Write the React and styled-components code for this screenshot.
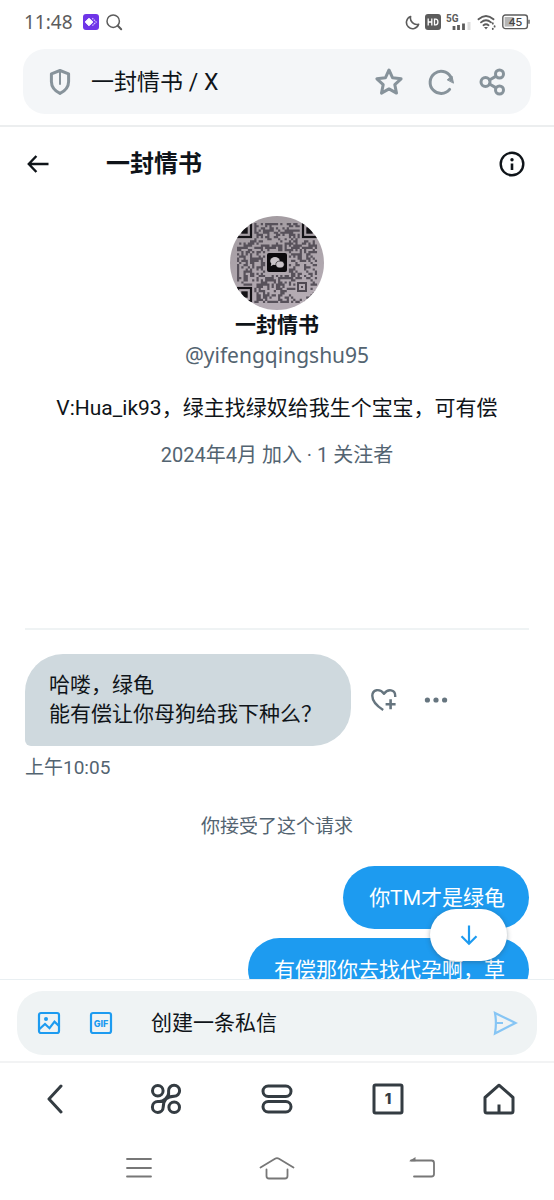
import React from 'react';
import styled, { createGlobalStyle } from 'styled-components';

const GlobalStyle = createGlobalStyle`
  * { box-sizing: border-box; }
  body {
    margin: 0;
    background: #fff;
    color: #0f1419;
    font-family: Roboto, "Noto Sans CJK SC", sans-serif;
  }
  button, input { font: inherit; color: inherit; }
  svg { display: block; flex: none; }
`;

const Screen = styled.div`
  display: flex;
  flex-direction: column;
  height: 100vh;
  background: #fff;
`;

const StatusBar = styled.div`
  display: flex;
  align-items: center;
  justify-content: space-between;
  height: 44px;
  padding: 0 24px;
  color: #5c5c5c;
`;

const StatusGroup = styled.div`
  display: flex;
  align-items: center;
  gap: ${(p) => p.$gap}px;
`;

const Clock = styled.time`
  font-family: "Noto Sans", sans-serif;
  font-size: 19px;
  line-height: 24px;
  margin-right: 3px;
`;

const AddressWrap = styled.div`
  padding: 5px 23px 11px;
  border-bottom: 2px solid #eceeef;
`;

const AddressBar = styled.div`
  display: flex;
  align-items: center;
  height: 65px;
  padding: 0 23px 0 24px;
  border-radius: 22px;
  background: #f4f6f8;
`;

const AddressText = styled.div`
  flex: 1;
  margin-left: 18px;
  padding-top: 3px;
  font-size: 23px;
  line-height: 32px;
`;

const IconButton = styled.button`
  display: flex;
  align-items: center;
  justify-content: center;
  width: ${(p) => p.$w || 30}px;
  height: ${(p) => p.$h || 30}px;
  padding: 0;
  border: 0;
  background: none;
  color: ${(p) => p.$color || 'inherit'};
  cursor: pointer;
`;

const Actions = styled.div`
  display: flex;
  gap: 22px;
  color: #87939b;
`;

const Header = styled.header`
  display: flex;
  align-items: center;
  height: 73px;
  padding: 0 26px 0 22px;
`;

const Title = styled.h1`
  flex: 1;
  margin: 0 0 0 52px;
  font-size: 24px;
  line-height: 32px;
  font-weight: 700;
`;

const ChatArea = styled.main`
  position: relative;
  display: flex;
  flex: 1;
  min-height: 0;
`;

const Scroller = styled.div`
  flex: 1;
  overflow-y: auto;
  scrollbar-width: none;
  padding: 16px 25px 0;
`;

const Profile = styled.section`
  display: flex;
  flex-direction: column;
  align-items: center;
  height: 414px;
  border-bottom: 2px solid #eff3f4;
  text-align: center;
`;

const Name = styled.h2`
  margin: 0;
  font-size: 21px;
  line-height: 30px;
  font-weight: 700;
`;

const Handle = styled.p`
  margin: 0;
  font-family: "Noto Sans", sans-serif;
  font-size: 21px;
  line-height: 30px;
  color: #536471;
`;

const Bio = styled.p`
  margin: 23px 0 0;
  font-size: 21px;
  line-height: 30px;
`;

const Joined = styled.p`
  margin: 18px 0 0;
  font-size: 20px;
  line-height: 28px;
  color: #536471;
`;

const IncomingRow = styled.div`
  display: flex;
  align-items: center;
  margin-top: 24px;
`;

const Bubble = styled.div`
  padding: ${(p) => (p.$mine ? '18px 24px 16px 26px' : '17px 29px 17px 24px')};
  border-radius: ${(p) => (p.$mine ? '32px' : '38px 38px 38px 6px')};
  background: ${(p) => (p.$mine ? '#1d9bf0' : '#cfd9de')};
  color: ${(p) => (p.$mine ? '#fff' : '#0f1419')};
  font-size: 21px;
  line-height: 29px;
`;

const MessageActions = styled.div`
  display: flex;
  gap: 22px;
  margin-left: 18px;
  color: #66757f;
`;

const Stamp = styled.time`
  display: block;
  margin-top: 9px;
  font-size: 19px;
  line-height: 26px;
  color: #536471;
`;

const Notice = styled.p`
  margin: 33px 0 26px;
  text-align: center;
  font-size: 19px;
  line-height: 26px;
  color: #536471;
`;

const Outgoing = styled.div`
  display: flex;
  flex-direction: column;
  align-items: flex-end;
  gap: 9px;
`;

const JumpButton = styled.button`
  position: absolute;
  right: 47px;
  bottom: 18px;
  display: flex;
  align-items: center;
  justify-content: center;
  width: 77px;
  height: 52px;
  border: 0;
  border-radius: 26px;
  background: #fff;
  color: #1d9bf0;
  box-shadow: 0 1px 5px rgba(50, 70, 85, 0.4);
  cursor: pointer;
`;

const ComposerWrap = styled.form`
  padding: 11px 17px 6px;
  border-top: 1px solid #e9eff2;
  border-bottom: 2px solid #f2f3f4;
`;

const Composer = styled.div`
  display: flex;
  align-items: center;
  height: 64px;
  padding: 0 17px;
  border-radius: 26px;
  background: #eff3f4;
`;

const Attachments = styled.div`
  display: flex;
  gap: 22px;
`;

const MessageInput = styled.input`
  flex: 1;
  min-width: 0;
  margin-left: 35px;
  padding: 0;
  border: 0;
  outline: 0;
  background: none;
  font-size: 21px;
  line-height: 30px;
  &::placeholder { color: #0f1419; opacity: 1; }
`;

const BrowserNav = styled.nav`
  display: grid;
  grid-template-columns: repeat(5, 1fr);
  justify-items: center;
  align-items: center;
  height: 72px;
  color: #343c42;
`;

const SystemNav = styled.nav`
  display: flex;
  justify-content: space-between;
  align-items: center;
  height: 65px;
  padding: 0 118px;
  color: #777;
`;

const Svg = ({ w, h = w, sw = 2, children }) => (
  <svg width={w} height={h} viewBox={`0 0 ${w} ${h}`} fill="none" stroke="currentColor"
    strokeWidth={sw} strokeLinecap="round" strokeLinejoin="round" aria-hidden="true">
    {children}
  </svg>
);

const GRID = 37;
const CELL = 80 / GRID;

const buildModules = () => {
  let seed = 9241;
  let d = '';
  for (let y = 0; y < GRID; y += 1) {
    for (let x = 0; x < GRID; x += 1) {
      seed = (seed * 1103515245 + 12345) % 2147483648;
      const corner = (x < 8 && y < 8) || (x > 28 && y < 8) || (x < 8 && y > 28);
      const middle = x > 12 && x < 24 && y > 12 && y < 24;
      const mark = x > 26 && x < 34 && y > 26 && y < 34;
      if (!corner && !middle && !mark && seed / 2147483648 > 0.54) {
        d += `M${(7 + x * CELL).toFixed(2)} ${(7 + y * CELL).toFixed(2)}h2.2v2.2h-2.2z`;
      }
    }
  }
  return d;
};
const MODULES = buildModules();

const Finder = ({ x, y }) => (
  <g transform={`translate(${x} ${y})`}>
    <rect x="1" y="1" width="13" height="13" fill="none" stroke="#141216" strokeWidth="2.2" />
    <rect x="4.3" y="4.3" width="6.4" height="6.4" fill="#141216" />
  </g>
);

const Avatar = () => (
  <svg width="94" height="94" viewBox="0 0 94 94" role="img" aria-label="头像">
    <defs>
      <clipPath id="round"><circle cx="47" cy="47" r="47" /></clipPath>
      <linearGradient id="paper" x1="0" y1="0" x2="0.3" y2="1">
        <stop offset="0" stopColor="#a19a9f" />
        <stop offset="1" stopColor="#b5acb4" />
      </linearGradient>
    </defs>
    <g clipPath="url(#round)">
      <rect width="94" height="94" fill="url(#paper)" />
      <path d={MODULES} fill="#57515a" />
      <Finder x="7" y="7" />
      <Finder x="72" y="7" />
      <Finder x="7" y="71" />
      <rect x="68" y="67" width="8" height="8" fill="none" stroke="#4f4952" strokeWidth="2" />
      <rect x="71" y="70" width="2" height="2" fill="#4f4952" />
      <rect x="37" y="37" width="20" height="19" rx="2" fill="#0c0a0d" />
      <ellipse cx="45" cy="45" rx="4.8" ry="4" fill="#c9c3c8" />
      <path d="M41.5 47l-.8 3.2 3-1.6z" fill="#c9c3c8" />
      <ellipse cx="50" cy="48.5" rx="4.2" ry="3.4" fill="#c9c3c8" stroke="#0c0a0d" strokeWidth=".6" />
    </g>
  </svg>
);

export default function App() {
  return (
    <>
      <GlobalStyle />
      <Screen>
        <StatusBar>
          <StatusGroup $gap={7}>
            <Clock>11:48</Clock>
            <svg width="16" height="16" viewBox="0 0 16 16" aria-hidden="true">
              <rect width="16" height="16" rx="3" fill="#6f35e8" />
              <path d="M6 4.2L9.8 8 6 11.8 2.2 8z" fill="#fff" stroke="#fff" strokeWidth="1" strokeLinejoin="round" />
              <path d="M9.2 4.2L13.2 8l-4 3.8" fill="none" stroke="#cdb8ff" strokeWidth="1.2" strokeDasharray="1.6 .7" />
            </svg>
            <Svg w={17} sw={1.5}>
              <circle cx="7.2" cy="7.2" r="6.2" />
              <path d="M11.8 11.8l3.4 3.4" strokeWidth="2" />
            </Svg>
          </StatusGroup>
          <StatusGroup $gap={5}>
            <Svg w={15} sw={1.6}>
              <path d="M5.6 1.6A6.2 6.2 0 1 0 13.6 9.2 6.4 6.4 0 0 1 5.6 1.6z" />
            </Svg>
            <svg width="16" height="16" viewBox="0 0 16 16" aria-hidden="true">
              <rect width="16" height="16" rx="3" fill="#5c5c5c" />
              <path d="M3.2 4.600v6.800M6.800 4.600v6.800M3.200 8h3.600M9.500 5.200v5.600h1.200q2.200-.2 2.200-2.800t-2.200-2.800z" fill="none" stroke="#fff" strokeWidth="1.3" />
            </svg>
            <svg width="26" height="18" viewBox="0 0 26 18" aria-hidden="true">
              <text x="0" y="9" fontFamily="Roboto, sans-serif" fontSize="10" fontWeight="700" fill="#5c5c5c">5G</text>
              <path d="M8 13v4M12.500 12v5M17.500 10.500V17" stroke="#5c5c5c" strokeWidth="2.800" />
              <path d="M23 9v8" stroke="#ddd" strokeWidth="3" />
            </svg>
            <svg width="20" height="17" viewBox="0 0 20 17" fill="none" stroke="#5c5c5c" strokeWidth="1.800" strokeLinecap="round" aria-hidden="true">
              <path d="M1.500 5.300q7.500-6.600 15 0M4 8.400q5-4.200 10 0M6.500 11.200q2.500-2 5 0" />
              <path d="M7 13h4l-2 2.500z" fill="#5c5c5c" stroke="none" />
              <path d="M15.800 9.200v.5M17.600 12.200v.5M15.800 14.600v.5" />
            </svg>
            <svg width="28" height="16" viewBox="0 0 28 16" aria-hidden="true">
              <rect x=".8" y="1" width="24.600" height="13.600" rx="2.600" fill="none" stroke="#5c5c5c" strokeWidth="1.400" />
              <rect x="2.600" y="3" width="9" height="9.600" fill="#b5b5b5" />
              <path d="M27 5.800v4" stroke="#5c5c5c" strokeWidth="1.400" />
              <text x="13.400" y="12" textAnchor="middle" fontFamily="Inter, sans-serif" fontSize="11" fontWeight="500" fill="#444">45</text>
            </svg>
          </StatusGroup>
        </StatusBar>

        <AddressWrap>
          <AddressBar>
            <IconButton $w={26} aria-label="安全" $color="#87939b">
              <Svg w={24} h={28} sw={3}>
                <path d="M12 2.500l8.600 3.300v7.600c0 5.400-3.300 9.300-8.600 12-5.300-2.700-8.600-6.600-8.600-12V5.800z" />
                <path d="M12 4v12" strokeWidth="2" />
              </Svg>
            </IconButton>
            <AddressText>一封情书 / X</AddressText>
            <Actions>
              <IconButton aria-label="收藏">
                <Svg w={30} sw={3}>
                  <path d="M15 3l3.600 7.800 8.500 1-6.300 5.800 1.700 8.500L15 21.900l-7.500 4.200 1.700-8.500-6.300-5.800 8.500-1z" />
                </Svg>
              </IconButton>
              <IconButton aria-label="刷新">
                <Svg w={30} sw={3}>
                  <path d="M23.600 22.400A11 11 0 1 1 24.600 9.800" />
                  <path d="M21.500 12.600L26 9l1.400 6.800z" fill="currentColor" strokeWidth="1" />
                </Svg>
              </IconButton>
              <IconButton aria-label="分享">
                <Svg w={30} sw={3}>
                  <circle cx="7.500" cy="15" r="4.500" />
                  <circle cx="21.500" cy="7" r="4" />
                  <circle cx="21.500" cy="23" r="4" />
                  <path d="M11.500 13l6.200-3.600M11.500 17l6.200 3.600" />
                </Svg>
              </IconButton>
            </Actions>
          </AddressBar>
        </AddressWrap>

        <Header>
          <IconButton $w={32} aria-label="返回">
            <Svg w={24} h={20} sw={2.4}>
              <path d="M22.500 10H3M10.400 2L2.800 10l7.600 8" strokeLinecap="butt" strokeLinejoin="miter" />
            </Svg>
          </IconButton>
          <Title>一封情书</Title>
          <IconButton $w={32} aria-label="对话信息">
            <Svg w={26} sw={2.4}>
              <circle cx="13" cy="13" r="11.300" />
              <circle cx="13" cy="8.800" r="1.700" fill="currentColor" stroke="none" />
              <path d="M13 12.500v6.500" strokeLinecap="butt" strokeWidth="2.600" />
            </Svg>
          </IconButton>
        </Header>

        <ChatArea>
          <Scroller>
            <Profile>
              <Avatar />
              <Name>一封情书</Name>
              <Handle>@yifengqingshu95</Handle>
              <Bio>V:Hua_ik93，绿主找绿奴给我生个宝宝，可有偿</Bio>
              <Joined>2024年4月 加入 · 1 关注者</Joined>
            </Profile>

            <IncomingRow>
              <Bubble>哈喽，绿龟<br />能有偿让你母狗给我下种么？</Bubble>
              <MessageActions>
                <IconButton aria-label="添加回应">
                  <Svg w={30} sw={2.400}>
                    <path d="M14.200 25C7 20.500 3.300 15.500 3.300 10.800 3.300 4.400 10.800 3 15 8.800 19 3.200 26.200 4.500 26.200 10.800V12" strokeLinecap="butt" />
                    <path d="M21.600 14.200v10M16.600 19.200h10" strokeLinecap="butt" strokeWidth="2.600" />
                  </Svg>
                </IconButton>
                <IconButton aria-label="更多">
                  <svg width="24" height="6" viewBox="0 0 24 6" fill="currentColor" aria-hidden="true">
                    <circle cx="3.400" cy="3" r="2.600" />
                    <circle cx="12" cy="3" r="2.600" />
                    <circle cx="20.600" cy="3" r="2.600" />
                  </svg>
                </IconButton>
              </MessageActions>
            </IncomingRow>
            <Stamp>上午10:05</Stamp>
            <Notice>你接受了这个请求</Notice>
            <Outgoing>
              <Bubble $mine>你TM才是绿龟</Bubble>
              <Bubble $mine>有偿那你去找代孕啊，草</Bubble>
            </Outgoing>
          </Scroller>
          <JumpButton type="button" aria-label="滚动到底部">
            <Svg w={20} h={22} sw={2.200}>
              <path d="M10 1.500v18M2.500 12.200l7.500 7.500 7.500-7.500" strokeLinecap="butt" strokeLinejoin="miter" />
            </Svg>
          </JumpButton>
        </ChatArea>

        <ComposerWrap onSubmit={(e) => e.preventDefault()}>
          <Composer>
            <Attachments>
              <IconButton type="button" aria-label="图片" $color="#1d9bf0">
                <Svg w={24} sw={2.200}>
                  <rect x="2" y="2" width="20" height="20" rx="2" />
                  <circle cx="9" cy="8" r="2" fill="currentColor" stroke="none" />
                  <path d="M2.500 18l5.500-5 4.500 4.200 5-6.600 4.500 4.400" strokeLinejoin="miter" />
                </Svg>
              </IconButton>
              <IconButton type="button" aria-label="动图" $color="#1d9bf0">
                <Svg w={24} sw={2.200}>
                  <rect x="2" y="2" width="20" height="20" rx="2" />
                  <text x="12" y="15.500" textAnchor="middle" fontFamily="Inter, sans-serif" fontSize="9" fontWeight="800" fill="currentColor" stroke="none">GIF</text>
                </Svg>
              </IconButton>
            </Attachments>
            <MessageInput aria-label="创建一条私信" placeholder="创建一条私信" />
            <IconButton aria-label="发送" $color="#86c5f4">
              <Svg w={26} sw={2.200}>
                <path d="M3 3l20.500 10L3 23.500q1.800-10.300 0-20.500zM4 13h7" strokeLinejoin="miter" strokeLinecap="butt" />
              </Svg>
            </IconButton>
          </Composer>
        </ComposerWrap>

        <BrowserNav aria-label="浏览器">
          <IconButton $w={48} $h={48} aria-label="后退">
            <Svg w={16} h={30} sw={3}>
              <path d="M14 2L2 15l12 13" />
            </Svg>
          </IconButton>
          <IconButton $w={48} $h={48} aria-label="工具">
            <Svg w={32} sw={3}>
              <circle cx="7.800" cy="7.800" r="5.300" />
              <circle cx="24.200" cy="24.200" r="5.300" />
              <path d="M18.600 13.200V7.800a5.500 5.500 0 1 1 5.500 5.400q-5.500.2-8.100 2.800t-2.800 8.100a5.400 5.400 0 1 1-5.400-5.500h1.500q3.300-.2 6.200-2.800 3.100-2.600 3.100-5.800" />
            </Svg>
          </IconButton>
          <IconButton $w={48} $h={48} aria-label="菜单">
            <Svg w={32} sw={3}>
              <rect x="2" y="3" width="28" height="10.500" rx="5.200" />
              <rect x="2" y="18.500" width="28" height="10.500" rx="5.200" />
            </Svg>
          </IconButton>
          <IconButton $w={48} $h={48} aria-label="标签页">
            <Svg w={32} sw={3}>
              <rect x="2" y="2" width="28" height="28" rx="1.500" />
              <text x="16" y="21" textAnchor="middle" fontFamily="Inter, sans-serif" fontSize="15" fontWeight="800" fill="currentColor" stroke="none">1</text>
            </Svg>
          </IconButton>
          <IconButton $w={48} $h={48} aria-label="主页">
            <Svg w={32} sw={3}>
              <path d="M2 14.500L16 2.200l14 12.300V28q0 2-2 2H4q-2 0-2-2zM16 21.500V29" strokeLinecap="butt" />
            </Svg>
          </IconButton>
        </BrowserNav>

        <SystemNav aria-label="系统">
          <IconButton $w={42} $h={36} aria-label="最近任务">
            <Svg w={28} h={24} sw={1.800}>
              <path d="M2 3h24M2 12h24M2 20.500h24" />
            </Svg>
          </IconButton>
          <IconButton $w={42} $h={36} aria-label="桌面">
            <Svg w={36} h={24} sw={1.800}>
              <path d="M1.500 11.500L16 2.700q2-1.200 4 0l14.500 8.800M7.500 13.500V20q0 2.500 2.500 2.500h16q2.500 0 2.500-2.500v-6.500" />
            </Svg>
          </IconButton>
          <IconButton $w={42} $h={36} aria-label="返回上一级">
            <Svg w={42} h={24} sw={1.800}>
              <path d="M17 4.500h20.500q2.500 0 2.500 2.500v11q0 2.500-2.500 2.500H20" />
              <path d="M15 5.300L21.500 1v4.300z" fill="currentColor" stroke="none" />
            </Svg>
          </IconButton>
        </SystemNav>
      </Screen>
    </>
  );
}
